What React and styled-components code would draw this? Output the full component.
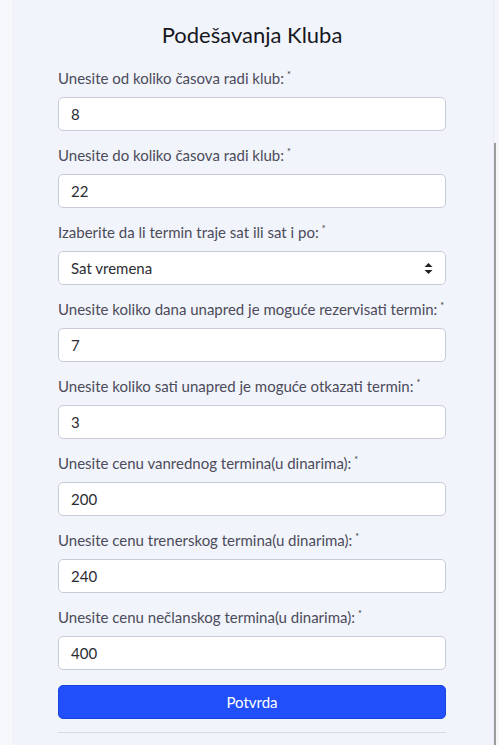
import React from 'react';
import styled, { createGlobalStyle } from 'styled-components';

const Global = createGlobalStyle`
  html, body {
    margin: 0;
    padding: 0;
    height: 100%;
    overflow: hidden;
    background: #f5f8fc;
    font-family: Lato, "Noto Sans", sans-serif;
  }
`;

const Page = styled.div`
  display: flex;
  height: 745px;
  width: 499px;
`;

const Gutter = styled.div`
  width: 12px;
  background: #f6f8fc;
`;

const Panel = styled.div`
  flex: 1;
  background: #f1f4fa;
  border-right: 1px solid #e8ecf7;
  padding: 0 47px 0 46px;
`;

const Rail = styled.div`
  width: 5px;
  background: #f4f5f8;
  display: flex;
  flex-direction: column;
`;

const Thumb = styled.div`
  margin-top: 143px;
  flex: 1;
  border-left: 2px solid #9c9c9c;
  background: #f7f7f7;
`;

const Title = styled.h2`
  margin: 21px 0 15px;
  text-align: center;
  font-weight: 400;
  font-size: 22px;
  line-height: 28px;
  color: #17171f;
`;

const Group = styled.div`
  margin-bottom: 10px;
`;

const Label = styled.label`
  display: block;
  font-size: 15px;
  line-height: 22px;
  color: #4c4b5a;
  margin-bottom: 8px;
  white-space: nowrap;
  sup {
    font-size: 9px;
    margin-left: 3px;
    vertical-align: 6px;
    color: #333;
  }
`;

const Field = styled.div`
  position: relative;
  height: 34px;
  box-sizing: border-box;
  background: #fff;
  border: 1px solid #c9cbd8;
  border-radius: 5px;
  padding: 0 12px;
  display: flex;
  align-items: center;
  justify-content: space-between;
  font-size: 15px;
  color: #2c2c34;
`;

const Arrows = styled.svg`
  width: 9px;
  height: 11px;
`;

const Button = styled.button`
  display: block;
  width: 100%;
  height: 34px;
  margin-top: 15px;
  background: #2150fb;
  color: #fff;
  border: 1px solid #1a44e0;
  border-radius: 5px;
  font-family: Lato, "Noto Sans", sans-serif;
  font-size: 15px;
`;

const Rule = styled.hr`
  border: 0;
  border-top: 1px solid #d8dae2;
  margin: 13px 0 0;
`;

const fields = [
  ['Unesite od koliko časova radi klub:', '8'],
  ['Unesite do koliko časova radi klub:', '22'],
  ['Izaberite da li termin traje sat ili sat i po:', 'Sat vremena', true],
  ['Unesite koliko dana unapred je moguće rezervisati termin:', '7'],
  ['Unesite koliko sati unapred je moguće otkazati termin:', '3'],
  ['Unesite cenu vanrednog termina(u dinarima):', '200'],
  ['Unesite cenu trenerskog termina(u dinarima):', '240'],
  ['Unesite cenu nečlanskog termina(u dinarima):', '400'],
];

export default function App() {
  return (
    <>
      <Global />
      <Page>
        <Gutter />
        <Panel>
          <Title>Podešavanja Kluba</Title>
          {fields.map(([label, value, select]) => (
            <Group key={label}>
              <Label>
                {label}
                <sup>*</sup>
              </Label>
              <Field>
                <span>{value}</span>
                {select && (
                  <Arrows viewBox="0 0 9 11">
                    <path d="M4.5 0 L8.5 4 H0.5 Z M4.5 11 L8.5 7 H0.5 Z" fill="#222" />
                  </Arrows>
                )}
              </Field>
            </Group>
          ))}
          <Button>Potvrda</Button>
          <Rule />
        </Panel>
        <Rail>
          <Thumb />
        </Rail>
      </Page>
    </>
  );
}
